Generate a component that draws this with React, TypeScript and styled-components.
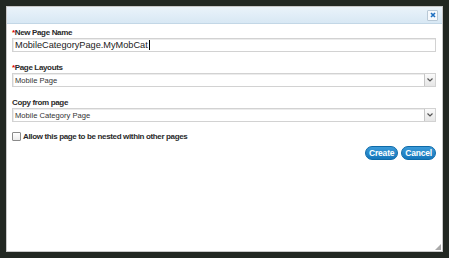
import styled, { createGlobalStyle } from "styled-components";

const GlobalStyle = createGlobalStyle`
    html, body {
        margin: 0;
        padding: 0;
        background: #222822;
        font-family: "Liberation Sans", Arial, sans-serif;
    }
`;

const Screen = styled.div`
    width: 449px;
    height: 258px;
    padding: 6px;
    box-sizing: border-box;
`;

const Dialog = styled.div`
    width: 437px;
    height: 246px;
    background: #ffffff;
    border: 1px solid #c8c8c8;
    box-sizing: border-box;
    display: flex;
    flex-direction: column;
    position: relative;
`;

const TitleBar = styled.div`
    height: 16px;
    background: linear-gradient(#eaf3fa, #d8e8f4);
    border-bottom: 1px solid #c3d7e6;
    display: flex;
    justify-content: flex-end;
    align-items: center;
    padding-right: 4px;
`;

const CloseButton = styled.div`
    width: 9px;
    height: 9px;
    border: 1px solid #b9c9d6;
    background: #f6f9fc;
    border-radius: 1px;
    display: flex;
    align-items: center;
    justify-content: center;
`;

const Body = styled.div`
    padding: 3px 6px 0 5px;
    display: flex;
    flex-direction: column;
`;

const Field = styled.div`
    display: flex;
    flex-direction: column;
    margin-bottom: 10px;
`;

const Label = styled.label`
    font-size: 8px;
    letter-spacing: -0.35px;
    font-weight: bold;
    color: #2a2a2a;
    line-height: 11px;
`;

const Required = styled.span`
    color: #d00;
`;

const TextBox = styled.div<{ $size?: number }>`
    height: 14px;
    border: 1px solid #d2d2d2;
    box-sizing: border-box;
    box-shadow: inset 1px 1px 0 #ececec;
    font-size: ${(p) => p.$size ?? 9.2}px;
    color: #222;
    padding: 0 2px;
    display: flex;
    align-items: center;
    background: #fff;
`;

const Caret = styled.span`
    display: inline-block;
    width: 1px;
    height: 10px;
    background: #000;
    margin-left: 1px;
`;

const SelectBox = styled(TextBox)`
    justify-content: space-between;
    padding-right: 0;
    color: #333;
`;

const Arrow = styled.div`
    width: 10px;
    height: 12px;
    border-left: 1px solid #c6c6c6;
    background: linear-gradient(#fafafa, #e6e6e6);
    display: flex;
    align-items: center;
    justify-content: center;
`;

const CheckRow = styled.div`
    display: flex;
    align-items: center;
    gap: 2px;
    height: 9px;
    font-size: 8px;
    letter-spacing: -0.35px;
    font-weight: bold;
    color: #2a2a2a;
`;

const CheckBox = styled.span`
    width: 7px;
    height: 7px;
    border: 1px solid #8a8a8a;
    border-radius: 1px;
    background: linear-gradient(#fff, #ececec);
`;

const Actions = styled.div`
    display: flex;
    justify-content: flex-end;
    gap: 3px;
    margin-top: 5px;
`;

const Button = styled.button`
    height: 14px;
    padding: 0 3px;
    border: 1px solid #0d6aa8;
    border-radius: 7px;
    background: linear-gradient(#3b9ad8, #1576bb);
    color: #fff;
    font-family: "Liberation Sans", Arial, sans-serif;
    font-size: 8.5px;
    letter-spacing: -0.2px;
    font-weight: bold;
    line-height: 12px;
`;

const Grip = styled.div`
    position: absolute;
    right: 1px;
    bottom: 1px;
    width: 6px;
    height: 6px;
    background:
        radial-gradient(circle, #aaa 0.8px, transparent 1px) 0 0 / 2px 2px;
    clip-path: polygon(100% 0, 100% 100%, 0 100%);
`;

const ArrowIcon = () => (
    <svg width="6" height="4" viewBox="0 0 6 4">
        <path d="M0.5 0.5 L3 3 L5.5 0.5" stroke="#555" strokeWidth="1.2" fill="none" />
    </svg>
);

const App = () => {
    return (
        <Screen>
            <GlobalStyle />
            <Dialog>
                <TitleBar>
                    <CloseButton>
                        <svg width="6" height="6" viewBox="0 0 6 6">
                            <path d="M1 1 L5 5 M5 1 L1 5" stroke="#1e6fc0" strokeWidth="1.6" />
                        </svg>
                    </CloseButton>
                </TitleBar>
                <Body>
                    <Field>
                        <Label><Required>*</Required>New Page Name</Label>
                        <TextBox>MobileCategoryPage.MyMobCat<Caret /></TextBox>
                    </Field>
                    <Field>
                        <Label><Required>*</Required>Page Layouts</Label>
                        <SelectBox $size={7.6}>
                            Mobile Page
                            <Arrow><ArrowIcon /></Arrow>
                        </SelectBox>
                    </Field>
                    <Field>
                        <Label>Copy from page</Label>
                        <SelectBox $size={7.6}>
                            Mobile Category Page
                            <Arrow><ArrowIcon /></Arrow>
                        </SelectBox>
                    </Field>
                    <CheckRow>
                        <CheckBox />
                        Allow this page to be nested within other pages
                    </CheckRow>
                    <Actions>
                        <Button>Create</Button>
                        <Button>Cancel</Button>
                    </Actions>
                </Body>
                <Grip />
            </Dialog>
        </Screen>
    );
};

export default App;
